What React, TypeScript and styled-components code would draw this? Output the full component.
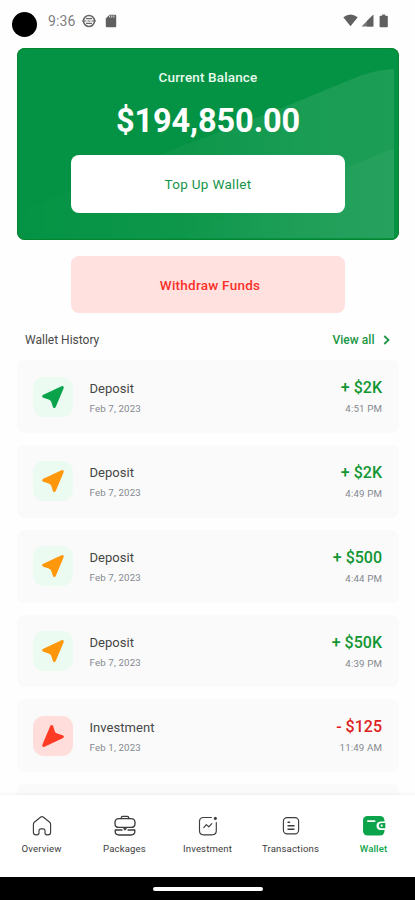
import React from 'react';
import styled, { createGlobalStyle } from 'styled-components';

const GlobalStyle = createGlobalStyle`
  *, *::before, *::after { box-sizing: border-box; }
  body { margin: 0; background: #fefefe; font-family: Roboto, sans-serif; }
  button { font-family: inherit; border: 0; padding: 0; cursor: pointer; }
`;

const Screen = styled.main`
  width: 415px;
  height: 900px;
  display: flex;
  flex-direction: column;
  overflow: hidden;
  background: #fefefe;
`;

const StatusBar = styled.header`
  flex: none;
  height: 48px;
  padding: 0 24px 7px 12px;
  display: flex;
  align-items: center;
  color: #606060;
`;

const Camera = styled.span`
  width: 25px;
  height: 25px;
  margin: 7px 11px 0 0;
  border-radius: 50%;
  background: #000;
`;

const Clock = styled.span`
  width: 34px;
  font-size: 14px;
  letter-spacing: 0.1px;
  color: #808080;
`;

const StatusIcons = styled.div<{ $right?: boolean }>`
  display: flex;
  align-items: center;
  gap: ${p => (p.$right ? 2.5 : 9)}px;
  margin-left: ${p => (p.$right ? 'auto' : '0')};
  svg { display: block; }
`;

const Content = styled.div`
  flex: 1;
  min-height: 0;
  overflow: hidden;
  padding: 0 16px 0 17px;
`;

const BalanceCard = styled.section`
  height: 191.5px;
  position: relative;
  overflow: hidden;
  border-radius: 8px;
  background: #049344;
  box-shadow: inset 0 0 0 1px #07862f;
  display: flex;
  flex-direction: column;
  align-items: center;
  color: #fff;
`;

const Rays = styled.svg`
  position: absolute;
  inset: 0;
`;

const BalanceLabel = styled.div`
  position: relative;
  margin-top: 19px;
  font-size: 13.5px;
  line-height: 20px;
  font-weight: 500;
  color: #e8faee;
  letter-spacing: 0.15px;
`;

const Balance = styled.div`
  position: relative;
  margin-top: 14px;
  font-size: 32.5px;
  line-height: 40px;
  font-weight: 700;
  letter-spacing: -0.1px;
`;

const ActionButton = styled.button<{ $danger?: boolean }>`
  position: relative;
  display: block;
  width: 274px;
  height: ${p => (p.$danger ? 57 : 58)}px;
  margin: ${p => (p.$danger ? '16.5px auto 0' : '14.4px 0 0')};
  padding: ${p => (p.$danger ? '0 0 0 4px' : '0 0 1px')};
  border-radius: 8px;
  background: ${p => (p.$danger ? '#ffe1df' : '#fff')};
  color: ${p => (p.$danger ? '#fa3029' : '#159447')};
  font-size: 13.5px;
  font-weight: ${p => (p.$danger ? 500 : 400)};
  letter-spacing: ${p => (p.$danger ? 0.25 : 0.3)}px;
`;

const HistoryHeader = styled.div`
  height: 47.2px;
  padding: 6px 9.5px 0 8px;
  display: flex;
  align-items: center;
  justify-content: space-between;
`;

const HistoryTitle = styled.h2`
  margin: 0;
  font-size: 12px;
  font-weight: 400;
  color: #484848;
`;

const ViewAll = styled.button`
  display: flex;
  align-items: center;
  gap: 8px;
  background: none;
  color: #219747;
  font-size: 12px;
  font-weight: 500;
  letter-spacing: 0.05px;
`;

const List = styled.div`
  display: flex;
  flex-direction: column;
  gap: 12px;
`;

const Row = styled.article`
  flex: none;
  height: 72.8px;
  padding: 0 17px 0 16px;
  border-radius: 8px;
  background: #fafafa;
  display: flex;
  align-items: center;
`;

const IconTile = styled.div<{ $bg: string }>`
  width: 40px;
  height: 40px;
  margin-right: 16.5px;
  border-radius: 11px;
  background: ${p => p.$bg};
  svg { display: block; }
`;

const Stack = styled.div<{ $end?: boolean }>`
  display: flex;
  flex-direction: column;
  align-items: ${p => (p.$end ? 'flex-end' : 'flex-start')};
  margin-left: ${p => (p.$end ? 'auto' : '0')};
  padding-top: 3.2px;
`;

const Title = styled.div`
  font-size: 13px;
  line-height: 21px;
  letter-spacing: 0.05px;
  color: #464646;
`;

const Meta = styled.div`
  font-size: 9.7px;
  line-height: 20px;
  letter-spacing: 0.14px;
  color: #858990;
`;

const Amount = styled.div<{ $negative: boolean }>`
  font-size: 16px;
  line-height: 22px;
  font-weight: 500;
  color: ${p => (p.$negative ? '#df2020' : '#119632')};
`;

const NavBar = styled.nav`
  flex: none;
  height: 81.5px;
  padding-top: 18.5px;
  display: grid;
  grid-template-columns: repeat(5, 1fr);
  background: #fff;
  box-shadow: 0 -1px 3px rgba(0, 0, 0, 0.05);
  z-index: 1;
`;

const NavItem = styled.button<{ $active?: boolean }>`
  display: flex;
  flex-direction: column;
  align-items: center;
  height: 46px;
  background: none;
  color: ${p => (p.$active ? '#0da44a' : '#3d3d3d')};
  font-size: 9.6px;
  line-height: 14px;
  font-weight: ${p => (p.$active ? 500 : 400)};
  letter-spacing: 0.15px;
  white-space: nowrap;
  svg { display: block; margin-bottom: 4px; }
`;

const GestureBar = styled.footer`
  flex: none;
  height: 23.5px;
  padding-top: 1px;
  display: flex;
  align-items: center;
  justify-content: center;
  background: #000;
`;

const GestureHandle = styled.span`
  width: 110px;
  height: 4px;
  border-radius: 2px;
  background: #fff;
`;

type Transaction = {
  title: string;
  date: string;
  amount: string;
  time: string;
  color: string;
};

const transactions: Transaction[] = [
  { title: 'Deposit', date: 'Feb 7, 2023', amount: '+ $2K', time: '4:51 PM', color: '#0aa34c' },
  { title: 'Deposit', date: 'Feb 7, 2023', amount: '+ $2K', time: '4:49 PM', color: '#ff970a' },
  { title: 'Deposit', date: 'Feb 7, 2023', amount: '+ $500', time: '4:44 PM', color: '#ff970a' },
  { title: 'Deposit', date: 'Feb 7, 2023', amount: '+ $50K', time: '4:39 PM', color: '#ff970a' },
  { title: 'Investment', date: 'Feb 1, 2023', amount: '- $125', time: '11:49 AM', color: '#ff3b25' },
];

const Arrow = ({ color, down }: { color: string; down: boolean }) => (
  <svg width="40" height="40" viewBox="0 0 40 40" fill={color} stroke={color} strokeWidth="1.4" strokeLinejoin="round">
    <path
      transform={down ? 'rotate(180 20 20)' : undefined}
      d="M28.8 9.9Q30.5 9.4 29.9 11.2L22.2 29.6Q21.3 31.2 20.5 29.6L18.9 24.6Q18.2 22.5 16 21.8L10.6 20.2Q9 19.4 10.6 18.4Z"
    />
  </svg>
);

const strokeProps = {
  width: 24,
  height: 24,
  viewBox: '0 0 24 24',
  fill: 'none',
  stroke: 'currentColor',
  strokeWidth: 1.15,
  strokeLinecap: 'round' as const,
  strokeLinejoin: 'round' as const,
};

const HomeIcon = () => (
  <svg {...strokeProps}>
    <path d="M3.4 10.2Q3.4 9 4.3 8.2L10.8 3Q12 2.1 13.2 3L19.7 8.2Q20.6 9 20.6 10.2V18.2Q20.6 20.8 18 20.8H17Q15 20.8 15 18.8V16.8Q15 14.8 13 14.8H11Q9 14.8 9 16.8V18.8Q9 20.8 7 20.8H6Q3.4 20.8 3.4 18.2Z" />
  </svg>
);

const PackagesIcon = () => (
  <svg {...strokeProps} strokeWidth="1.35">
    <path d="M8.3 4.6V3.8Q8.3 2.3 9.8 2.3H14.2Q15.7 2.3 15.7 3.8V4.6" />
    <path d="M6 4.6H18Q22 4.6 22 8.6V9.4Q22 13.4 18 13.4H6Q2 13.4 2 9.4V8.6Q2 4.6 6 4.6Z" />
    <path d="M2.2 16V17.6Q2.2 21 6 21H18Q21.8 21 21.8 17.6V16M2.2 16H9M15 16H21.8M10.6 13.6L12 15.8L13.4 13.6" />
  </svg>
);

const InvestmentIcon = () => (
  <svg {...strokeProps}>
    <path d="M15.4 3.5H7.5Q3.5 3.5 3.5 7.5V16.5Q3.5 20.8 7.5 20.8H16Q20.3 20.8 20.3 16.5V8.5" />
    <path d="M7.8 13.6L10.3 10.6L12.8 12.8L15.8 9.6" />
    <circle cx="19.3" cy="4.5" r="1.4" fill="currentColor" strokeWidth="0.3" />
  </svg>
);

const TransactionsIcon = () => (
  <svg {...strokeProps}>
    <rect x="4.4" y="3.6" width="15.2" height="16.2" rx="3.6" />
    <path d="M9 8.2H10.6M9 11.8H15M9 15.3H15" strokeWidth="1.4" />
  </svg>
);

const WalletIcon = () => (
  <svg width="24" height="24" viewBox="0 0 24 24">
    <rect x="1" y="2" width="21.5" height="19.5" rx="4.5" fill="#0ba44b" />
    <rect x="5" y="6.2" width="8.5" height="1.8" rx="0.9" fill="#fff" />
    <path d="M24 7.4H18.6Q14.5 7.8 14.5 11.7Q14.5 15.6 18.6 16H24Z" fill="#fff" />
    <path d="M23.3 9.1H19.2Q16.7 9.3 16.7 11.7Q16.7 14.1 19.2 14.3H23.3Z" fill="#0ba44b" />
    <circle cx="19.7" cy="11.7" r="1.1" fill="#fff" />
  </svg>
);

const navItems = [
  { label: 'Overview', Icon: HomeIcon },
  { label: 'Packages', Icon: PackagesIcon },
  { label: 'Investment', Icon: InvestmentIcon },
  { label: 'Transactions', Icon: TransactionsIcon },
  { label: 'Wallet', Icon: WalletIcon, active: true },
];

export default function App() {
  return (
    <>
      <GlobalStyle />
      <Screen>
        <StatusBar>
          <Camera />
          <Clock>9:36</Clock>
          <StatusIcons>
            <svg width="14" height="14" viewBox="0 0 14 14" fill="none" stroke="#686868">
              <circle cx="7" cy="7" r="5.5" strokeWidth="1.6" />
              <path d="M0 7H4.5M9.5 7H14M4 4.6H10M4 9.4H10M5.5 7H8.5" strokeWidth="1.1" />
            </svg>
            <svg width="12" height="14" viewBox="0 0 12 14">
              <path d="M4.5 .7H10.2Q11.2.7 11.2 1.7V12.3Q11.2 13.3 10.2 13.3H1.8Q.8 13.3.8 12.3V4.4Z" fill="#606060" />
              <path d="M4.7 1.4V3.6M6.8 1.4V3.6M8.9 1.4V3.6" stroke="#ddd" strokeWidth="1" />
            </svg>
          </StatusIcons>
          <StatusIcons $right>
            <svg width="15" height="13" viewBox="0 0 15 13"><path d="M.3 3.2Q7.5-2 14.7 3.2L7.5 12.2Z" fill="#606060" /></svg>
            <svg width="13" height="13" viewBox="0 0 13 13">
              <path d="M.5 12.5L12.3.7V12.5Z" fill="#777" />
              <path d="M6 7L12.3.7V12.5H6Z" fill="#606060" />
            </svg>
            <svg width="15" height="14" viewBox="0 0 15 14"><path d="M6.2 .5H9.2V1.8H11Q11.8 1.8 11.8 2.6V12.5Q11.8 13.3 11 13.3H4.4Q3.6 13.3 3.6 12.5V2.6Q3.6 1.8 4.4 1.8H6.2Z" fill="#606060" /></svg>
          </StatusIcons>
        </StatusBar>

        <Content>
          <BalanceCard>
            <Rays width="382" height="192" viewBox="0 0 382 192">
              <defs>
                <linearGradient id="upperRay" x1="0" x2="1">
                  <stop offset="0" stopColor="#fff" stopOpacity="0" />
                  <stop offset="0.4" stopColor="#fff" stopOpacity="0.035" />
                  <stop offset="0.75" stopColor="#fff" stopOpacity="0.085" />
                  <stop offset="1" stopColor="#fff" stopOpacity="0.1" />
                </linearGradient>
                <linearGradient id="lowerRay" x1="0" x2="1">
                  <stop offset="0" stopColor="#fff" stopOpacity="0" />
                  <stop offset="1" stopColor="#fff" stopOpacity="0.045" />
                </linearGradient>
              </defs>
              <path d="M0 165L160 100L265 60L335 31Q356 22 377 21V190H0Z" fill="url(#upperRay)" />
              <path d="M160 191Q255 147 329 120L370 103L377 101V190H160Z" fill="url(#lowerRay)" />
            </Rays>
            <BalanceLabel>Current Balance</BalanceLabel>
            <Balance>$194,850.00</Balance>
            <ActionButton>Top Up Wallet</ActionButton>
          </BalanceCard>
          <ActionButton $danger>Withdraw Funds</ActionButton>

          <HistoryHeader>
            <HistoryTitle>Wallet History</HistoryTitle>
            <ViewAll>
              View all
              <svg width="7" height="10" viewBox="0 0 7 10" fill="none" stroke="currentColor" strokeWidth="1.8"><path d="M1.3 1L5.5 5L1.3 9" /></svg>
            </ViewAll>
          </HistoryHeader>

          <List>
            {transactions.map(t => {
              const negative = t.amount.startsWith('-');
              return (
                <Row key={t.time}>
                  <IconTile $bg={negative ? '#ffdddb' : '#ebfbf1'}>
                    <Arrow color={t.color} down={negative} />
                  </IconTile>
                  <Stack>
                    <Title>{t.title}</Title>
                    <Meta>{t.date}</Meta>
                  </Stack>
                  <Stack $end>
                    <Amount $negative={negative}>{t.amount}</Amount>
                    <Meta>{t.time}</Meta>
                  </Stack>
                </Row>
              );
            })}
            <Row />
          </List>
        </Content>

        <NavBar>
          {navItems.map(({ label, Icon, active }) => (
            <NavItem key={label} $active={active}>
              <Icon />
              {label}
            </NavItem>
          ))}
        </NavBar>
        <GestureBar><GestureHandle /></GestureBar>
      </Screen>
    </>
  );
}
